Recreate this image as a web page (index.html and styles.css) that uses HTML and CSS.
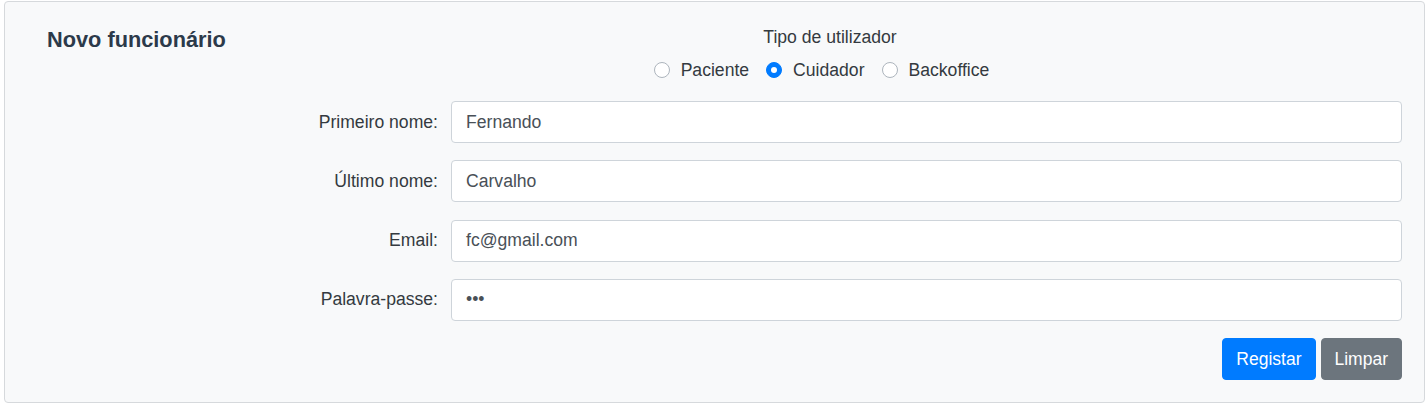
FILE: index.html
```html
<!DOCTYPE html>
<html lang="pt">
<head>
<meta charset="utf-8">
<title>Novo funcionário</title>
<link rel="stylesheet" href="styles.css">
</head>
<body>
<div class="page">
  <section class="card">
    <h2 class="card-title">Novo funcionário</h2>
    <form class="form">
      <div class="type-head">Tipo de utilizador</div>
      <div class="radios">
        <label class="radio"><span class="dot"></span>Paciente</label>
        <label class="radio"><span class="dot checked"></span>Cuidador</label>
        <label class="radio"><span class="dot"></span>Backoffice</label>
      </div>
      <div class="field">
        <label class="field-label">Primeiro nome:</label>
        <div class="input">Fernando</div>
      </div>
      <div class="field">
        <label class="field-label">Último nome:</label>
        <div class="input">Carvalho</div>
      </div>
      <div class="field">
        <label class="field-label">Email:</label>
        <div class="input">fc@gmail.com</div>
      </div>
      <div class="field">
        <label class="field-label">Palavra-passe:</label>
        <div class="input pw">•••</div>
      </div>
      <div class="actions">
        <button type="button" class="btn btn-primary">Registar</button>
        <button type="button" class="btn btn-secondary">Limpar</button>
      </div>
    </form>
  </section>
</div>
</body>
</html>
```
FILE: styles.css
```css
* { box-sizing: border-box; }
html, body { margin: 0; padding: 0; background: #ffffff; }
body {
  font-family: "Liberation Sans", Arial, sans-serif;
  font-size: 17.6px;
  color: #343a40;
}
.page { padding: 1px 2px 1px 4px; }
.card {
  display: flex;
  background: #f8f9fa;
  border: 1px solid #d6d9dc;
  border-radius: 4px;
  padding: 22px 22px 21.5px 42px;
}
.card-title {
  flex: 0 0 211px;
  margin: 0;
  font-size: 21.75px;
  line-height: 32px;
  font-weight: 700;
  color: #2c3a4a;
}
.form {
  flex: 1;
  display: flex;
  flex-direction: column;
}
.type-head {
  text-align: center;
  line-height: 26px;
  color: #343a40;
}
.radios {
  display: flex;
  justify-content: center;
  margin-top: 7px;
  margin-bottom: 18px;
  line-height: 26px;
}
.radio {
  display: flex;
  align-items: center;
  margin-right: 17px;
  color: #343a40;
}
.dot {
  width: 16px;
  height: 16px;
  border: 1px solid #adb5bd;
  border-radius: 50%;
  background: #fff;
  margin-right: 11px;
  position: relative;
}
.dot.checked {
  background: #007bff;
  border-color: #007bff;
}
.dot.checked::after {
  content: "";
  position: absolute;
  left: 4px;
  top: 4px;
  width: 6px;
  height: 6px;
  border-radius: 50%;
  background: #fff;
}
.field {
  display: flex;
  align-items: center;
  margin-bottom: 17.33px;
}
.field-label {
  flex: 0 0 193px;
  text-align: right;
  padding-right: 13px;
  color: #343a40;
}
.input {
  flex: 1;
  height: 42px;
  background: #fff;
  border: 1px solid #ced4da;
  border-radius: 4px;
  padding: 0 14px;
  display: flex;
  align-items: center;
  color: #495057;
}
.actions {
  display: flex;
  justify-content: flex-end;
  gap: 5px;
}
.btn {
  font-family: inherit;
  font-size: 17.5px;
  height: 42px;
  padding: 0 13px;
  border: 1px solid transparent;
  border-radius: 4px;
  color: #fff;
  cursor: pointer;
}
.btn-primary { background: #007bff; border-color: #007bff; }
.btn-secondary { background: #6c757d; border-color: #6c757d; }
```
